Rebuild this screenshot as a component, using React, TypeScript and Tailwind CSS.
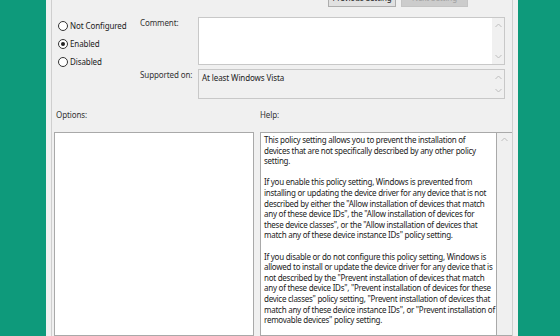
import React from "react";

const helpLines: string[][] = [
  [
    "This policy setting allows you to prevent the installation of",
    "devices that are not specifically described by any other policy",
    "setting.",
  ],
  [
    "If you enable this policy setting, Windows is prevented from",
    "installing or updating the device driver for any device that is not",
    "described by either the \"Allow installation of devices that match",
    "any of these device IDs\", the \"Allow installation of devices for",
    "these device classes\", or the \"Allow installation of devices that",
    "match any of these device instance IDs\" policy setting.",
  ],
  [
    "If you disable or do not configure this policy setting, Windows is",
    "allowed to install or update the device driver for any device that is",
    "not described by the \"Prevent installation of devices that match",
    "any of these device IDs\", \"Prevent installation of devices for these",
    "device classes\" policy setting, \"Prevent installation of devices that",
    "match any of these device instance IDs\", or \"Prevent installation of",
    "removable devices\" policy setting.",
  ],
];

const Chevron = ({ up }: { up?: boolean }) => (
  <svg width="7" height="5" viewBox="0 0 7 5" className="block">
    <path
      d={up ? "M0.5 4 L3.5 1 L6.5 4" : "M0.5 1 L3.5 4 L6.5 1"}
      fill="none"
      stroke="#bdbdbd"
      strokeWidth="1"
    />
  </svg>
);

const Radio = ({ label, checked }: { label: string; checked?: boolean }) => (
  <div className="flex items-center gap-[2px] h-[18px]">
    <div className="w-[10px] h-[10px] rounded-full border border-[#333] bg-white flex items-center justify-center">
      {checked && <div className="w-[4px] h-[4px] rounded-full bg-[#222]" />}
    </div>
    <span className="text-[8px] tracking-[-0.1px] text-[#222]">{label}</span>
  </div>
);

const App = () => {
  return (
    <div
      className="w-[560px] h-[336px] bg-[#0e9a7b] flex overflow-hidden"
      style={{ fontFamily: '"Noto Sans", "Open Sans", sans-serif' }}
    >
      <div className="w-[46px] shrink-0" />
      <div className="w-[472px] shrink-0 bg-[#f0f0f0] pl-[5px] pr-[5px]">
        <div className="h-full border-x border-[#cfcfcf] flex flex-col">
          {/* top buttons, mostly scrolled off */}
          <div className="h-[17px] flex">
            <div className="ml-[276px] mt-[-11px] h-[18px] w-[68px] border border-[#adadad] bg-[#e1e1e1] flex items-center justify-center whitespace-nowrap text-[8px] tracking-[-0.1px] text-[#222]">
              Previous Setting
            </div>
            <div className="ml-[5px] mt-[-11px] h-[18px] w-[67px] border border-[#c4c4c4] bg-[#cccccc] flex items-center justify-center whitespace-nowrap text-[8px] tracking-[-0.1px] text-[#a3a3a3]">
              Next Setting
            </div>
          </div>

          <div className="flex">
            <div className="w-[88px] pl-[6px] flex flex-col">
              <Radio label="Not Configured" />
              <Radio label="Enabled" checked />
              <Radio label="Disabled" />
            </div>
            <div className="flex flex-col">
              <div className="flex">
                <div className="w-[58px] whitespace-nowrap text-[8px] tracking-[-0.1px] text-[#333] leading-[10px] pt-[1px]">
                  Comment:
                </div>
                <div className="w-[307px] h-[48px] border border-[#c8c8c8] bg-white flex">
                  <div className="flex-1" />
                  <div className="w-[12px] bg-[#f0f0f0] flex flex-col items-center justify-between py-[5px]">
                    <Chevron up />
                    <Chevron />
                  </div>
                </div>
              </div>
              <div className="flex mt-[4px]">
                <div className="w-[58px] whitespace-nowrap text-[8px] tracking-[-0.1px] text-[#333] leading-[10px] pt-[1px]">
                  Supported on:
                </div>
                <div className="w-[307px] h-[30px] border border-[#c8c8c8] bg-[#f0f0f0] flex">
                  <div className="flex-1 pl-[3px] pt-[3px] whitespace-nowrap text-[8px] tracking-[-0.1px] leading-[10px] text-[#222]">
                    At least Windows Vista
                  </div>
                  <div className="w-[12px] flex flex-col items-center justify-between py-[5px]">
                    <Chevron up />
                    <Chevron />
                  </div>
                </div>
              </div>
            </div>
          </div>

          <div className="flex mt-[10px] h-[12px] text-[8px] tracking-[-0.1px] text-[#333] leading-[12px]">
            <div className="w-[208px] pl-[4px]">Options:</div>
            <div>Help:</div>
          </div>

          <div className="flex mt-[11px] flex-1">
            <div className="ml-[2px] w-[200px] border border-[#a9a9a9] bg-white" />
            <div className="ml-[6px] flex-1 border border-[#a9a9a9] border-r-0 bg-[#f0f0f0] flex">
              <div className="w-[236px] bg-white border-r border-[#a9a9a9] pl-[3px] pt-[2px] text-[8px] tracking-[-0.26px] leading-[10.6px] text-[#222]">
                {helpLines.map((para, i) => (
                  <div key={i} className={i > 0 ? "mt-[10.6px]" : ""}>
                    {para.map((line, j) => (
                      <div key={j} className="whitespace-nowrap">
                        {line}
                      </div>
                    ))}
                  </div>
                ))}
              </div>
              <div className="flex-1 flex justify-center pt-[4px]">
                <Chevron up />
              </div>
            </div>
          </div>
        </div>
      </div>
    </div>
  );
};

export default App;
